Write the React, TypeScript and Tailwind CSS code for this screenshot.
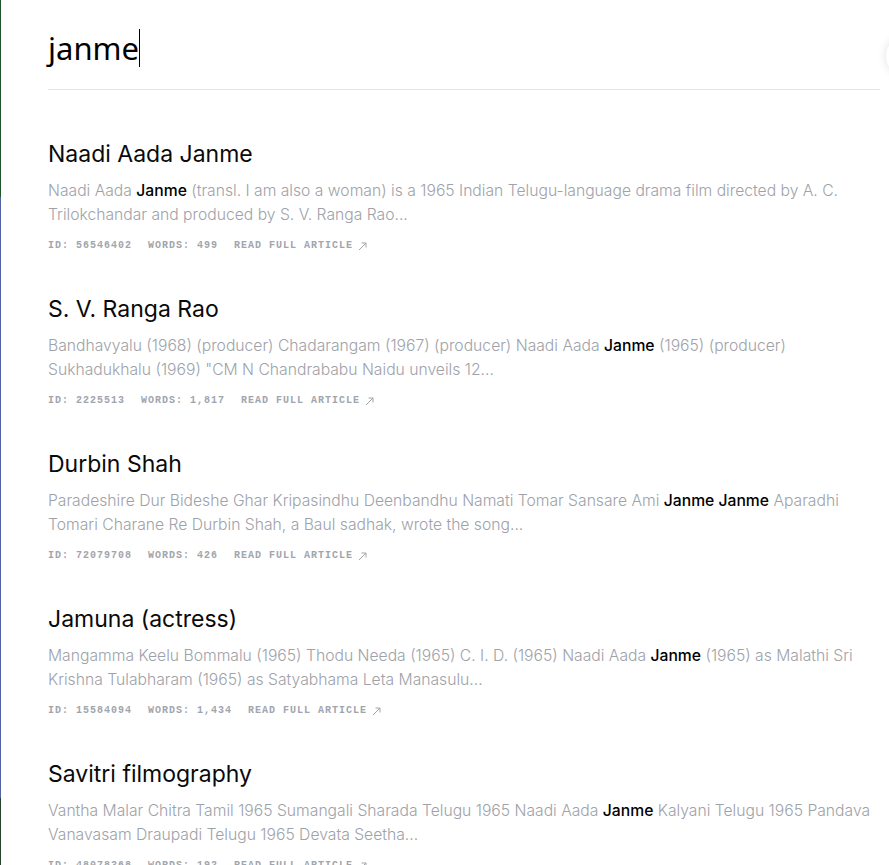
import React from "react";

type Part = string | { h: string };
type Item = { title: string; snippet: Part[]; id: string; words: string };

const items: Item[] = [
  {
    title: "Naadi Aada Janme",
    snippet: [
      "Naadi Aada ",
      { h: "Janme" },
      " (transl. I am also a woman) is a 1965 Indian Telugu-language drama film directed by A. C. Trilokchandar and produced by S. V. Ranga Rao...",
    ],
    id: "56546402",
    words: "499",
  },
  {
    title: "S. V. Ranga Rao",
    snippet: [
      "Bandhavyalu (1968) (producer) Chadarangam (1967) (producer) Naadi Aada ",
      { h: "Janme" },
      " (1965) (producer) Sukhadukhalu (1969) \"CM N Chandrababu Naidu unveils 12...",
    ],
    id: "2225513",
    words: "1,817",
  },
  {
    title: "Durbin Shah",
    snippet: [
      "Paradeshire Dur Bideshe Ghar Kripasindhu Deenbandhu Namati Tomar Sansare Ami ",
      { h: "Janme Janme" },
      " Aparadhi Tomari Charane Re Durbin Shah, a Baul sadhak, wrote the song...",
    ],
    id: "72079708",
    words: "426",
  },
  {
    title: "Jamuna (actress)",
    snippet: [
      "Mangamma Keelu Bommalu (1965) Thodu Needa (1965) C. I. D. (1965) Naadi Aada ",
      { h: "Janme" },
      " (1965) as Malathi Sri Krishna Tulabharam (1965) as Satyabhama Leta Manasulu...",
    ],
    id: "15584094",
    words: "1,434",
  },
  {
    title: "Savitri filmography",
    snippet: [
      "Vantha Malar Chitra Tamil 1965 Sumangali Sharada Telugu 1965 Naadi Aada ",
      { h: "Janme" },
      " Kalyani Telugu 1965 Pandava Vanavasam Draupadi Telugu 1965 Devata Seetha...",
    ],
    id: "48078368",
    words: "192",
  },
];

function Arrow() {
  return (
    <svg width="9" height="9" viewBox="0 0 9 9" className="ml-[5px] inline-block align-[-1px]" fill="none" stroke="#a1a5ad" strokeWidth="1">
      <path d="M1 8 L8 1 M3.5 1 H8 V5.5" />
    </svg>
  );
}

export default function App() {
  return (
    <div className="relative min-h-[865px] bg-white overflow-hidden" style={{ fontFamily: "Inter, 'Liberation Sans', sans-serif" }}>
      {/* left window edge */}
      <div className="absolute left-0 top-0 w-px h-[865px] flex flex-col">
        <div className="h-[197px] bg-[#22552f]" />
        <div className="h-[601px] bg-[#5562a6]" />
        <div className="flex-1 bg-[#24452c]" />
      </div>
      {/* floating element partially off-screen */}
      <div className="absolute top-[36px] left-[886px] w-10 h-10 rounded-full bg-white shadow-[0_0_10px_rgba(0,0,0,0.12)]" />

      <div className="pl-12 pr-[9px]">
        <div className="pt-6 pb-[17px] border-b border-[#e5e5e5] h-[90px] flex items-start">
          <div
            className="flex items-center h-12 text-[31px] text-black"
            style={{ fontFamily: "'Noto Sans', 'Open Sans', sans-serif" }}
          >
            <span className="leading-[38px]">janme</span>
            <span className="inline-block w-px h-[38px] bg-black" />
          </div>
        </div>

        <div className="pt-12 flex flex-col gap-[39px]">
          {items.map((it) => (
            <div key={it.title} className="flex flex-col">
              <h2 className="text-[23px] leading-8 text-[#0a0a0a] font-normal">{it.title}</h2>
              <p className="mt-[9px] text-[15.7px] leading-6 font-light text-[#9ea2a9]">
                {it.snippet.map((p, i) =>
                  typeof p === "string" ? (
                    <span key={i}>{p}</span>
                  ) : (
                    <span key={i} className="font-medium text-black">
                      {p.h}
                    </span>
                  )
                )}
              </p>
              <div
                className="mt-[11px] flex gap-4 text-[10px] leading-4 font-bold tracking-[1px] text-[#a1a5ad] uppercase"
                style={{ fontFamily: "'Liberation Mono', 'DejaVu Sans Mono', monospace" }}
              >
                <span>ID: {it.id}</span>
                <span>Words: {it.words}</span>
                <span className="flex items-center">
                  Read full article
                  <Arrow />
                </span>
              </div>
            </div>
          ))}
        </div>
      </div>
    </div>
  );
}
